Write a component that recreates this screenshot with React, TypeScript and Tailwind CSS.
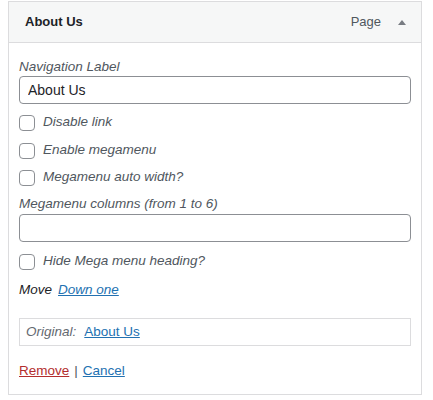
export default function App() {
  return (
    <div className="w-[433px] h-[400px] bg-white pt-px" style={{ fontFamily: '"Liberation Sans", Arial, sans-serif' }}>
      <div className="ml-2 w-[414px] h-[394px] border border-[#dcdcde] bg-white">
        {/* en-tête */}
        <div className="h-[41px] bg-[#f6f7f7] border-b border-[#dcdcde] flex items-center pl-4 pr-[12px]">
          <span className="flex-1 text-[13px] font-bold text-[#1d2327]">About Us</span>
          <span className="text-[13px] text-[#50575e]">Page</span>
          <svg width="10" height="10" viewBox="0 0 10 10" className="ml-[16px] mr-[2px]">
            <path d="M1 8 L5 3 L9 8 Z" fill="#787c82" />
          </svg>
        </div>

        <div className="px-[10px] text-[13.5px]">
          <div className="pt-[15px] italic text-[#50575e] leading-[18px]">Navigation Label</div>
          <input
            defaultValue="About Us"
            className="w-full h-[28px] border border-[#8c8f94] rounded-[4px] px-2 text-[14px] text-[#1d2327] outline-none"
          />

          <label className="flex items-center gap-[8px] mt-[10px] h-[17px] italic text-[#50575e]">
            <span className="w-4 h-4 border border-[#8c8f94] rounded-[4px] bg-white" />
            Disable link
          </label>
          <label className="flex items-center gap-[8px] mt-[11px] h-[17px] italic text-[#50575e]">
            <span className="w-4 h-4 border border-[#8c8f94] rounded-[4px] bg-white" />
            Enable megamenu
          </label>
          <label className="flex items-center gap-[8px] mt-[10px] h-[17px] italic text-[#50575e]">
            <span className="w-4 h-4 border border-[#8c8f94] rounded-[4px] bg-white" />
            Megamenu auto width?
          </label>

          <div className="mt-[9px] italic text-[#50575e] leading-[18px]">Megamenu columns (from 1 to 6)</div>
          <input className="mt-[1px] w-full h-[28px] border border-[#8c8f94] rounded-[4px] px-2 outline-none" />

          <label className="flex items-center gap-[8px] mt-[11px] h-[17px] italic text-[#50575e]">
            <span className="w-4 h-4 border border-[#8c8f94] rounded-[4px] bg-white" />
            Hide Mega menu heading?
          </label>

          <div className="mt-[11px] flex items-center gap-[6px] h-[18px] italic">
            <span className="text-[#1d2327]">Move</span>
            <a href="#" className="text-[#2271b1] underline">Down one</a>
          </div>

          <div className="mt-[19px] h-[28px] border border-[#dcdcde] flex items-center px-[6px] gap-[8px]">
            <span className="italic text-[#646970]">Original:</span>
            <a href="#" className="text-[#2271b1] underline">About Us</a>
          </div>

          <div className="mt-[16px] h-[18px] flex items-center gap-[5px]">
            <a href="#" className="text-[#b32d2e] underline">Remove</a>
            <span className="text-[#50575e]">|</span>
            <a href="#" className="text-[#2271b1] underline">Cancel</a>
          </div>
        </div>
      </div>
    </div>
  );
}
